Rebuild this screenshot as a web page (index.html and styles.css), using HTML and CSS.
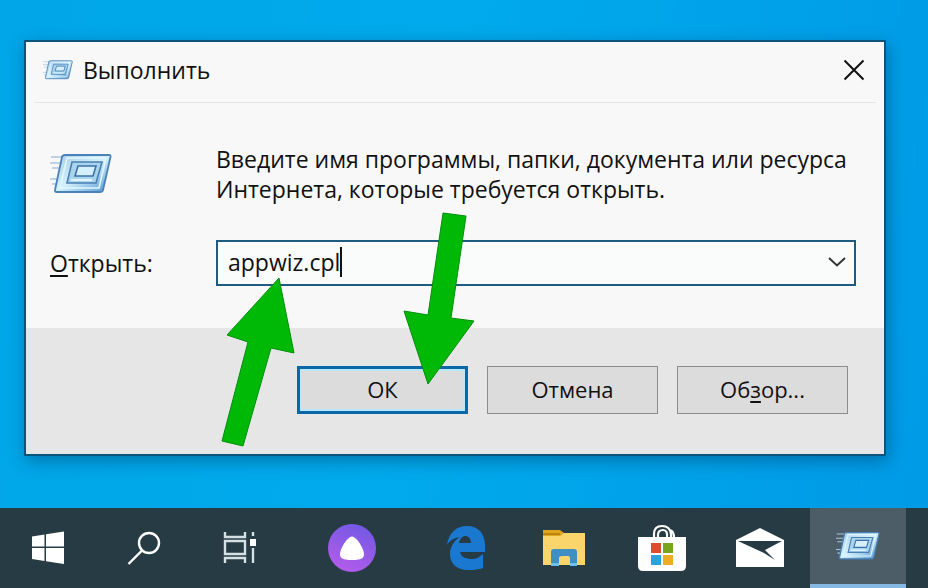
FILE: index.html
```html
<!DOCTYPE html>
<html lang="ru">
<head>
<meta charset="utf-8">
<meta name="viewport" content="width=device-width, initial-scale=1">
<title>Выполнить</title>
<link rel="stylesheet" href="styles.css">
</head>
<body>
<svg class="defs" aria-hidden="true">
  <defs>
    <linearGradient id="glass" x1="0" y1="0" x2="1" y2="1">
      <stop offset="0" stop-color="#a9cbea"/>
      <stop offset=".5" stop-color="#d3f1fb"/>
      <stop offset="1" stop-color="#4f93cf"/>
    </linearGradient>
    <linearGradient id="alice" x1=".7" y1="0" x2=".3" y2="1">
      <stop offset="0" stop-color="#7259e4"/>
      <stop offset="1" stop-color="#b45cea"/>
    </linearGradient>
    <symbol id="run" viewBox="0 0 62 42">
      <path d="M1 4h12M0 10h11M2 15h7M0 26h8M2 31h4" stroke="#a9c6de" stroke-width="1.5" fill="none"/>
      <path d="M15 2H59q2 0 1.500 2L53 37q-.5 2-3 2H7q-2.500 0-2-2L12 4q.5-2 3-2z" fill="url(#glass)" stroke="#4a82b8" stroke-width="1.800"/>
      <path d="M17 5H56L49 35H10z" fill="none" stroke="#e2f8ff" stroke-width="1.500"/>
      <path d="M22 9H52L46 30H17z" fill="#a8d5ee" stroke="#4a7fb3" stroke-width="1.600"/>
      <path d="M28 13H46L43 23H25z" fill="#d5effc" stroke="#3e70a8" stroke-width="1.600"/>
      <path d="M21 27H42" stroke="#dff5ff" stroke-width="2"/>
    </symbol>
  </defs>
</svg>

<main class="desktop">
  <form class="dialog" role="dialog" aria-labelledby="dialog-title">
    <header class="titlebar">
      <svg class="title-icon" aria-hidden="true"><use href="#run"/></svg>
      <h1 id="dialog-title">Выполнить</h1>
      <button class="close" type="button" aria-label="Закрыть">
        <svg viewBox="0 0 22 22" aria-hidden="true"><path d="M1.500 1.500 20.500 20.500M20.500 1.500 1.500 20.500"/></svg>
      </button>
    </header>

    <div class="body">
      <svg class="run-icon" aria-hidden="true"><use href="#run"/></svg>
      <p>Введите имя программы, папки, документа или ресурса<br>Интернета, которые требуется открыть.</p>
      <label for="command"><u>О</u>ткрыть:</label>
      <div class="combo">
        <input id="command" type="text" value="appwiz.cpl" size="10" autocomplete="off" spellcheck="false">
        <span class="caret"></span>
        <button class="drop" type="button" aria-label="Показать список">
          <svg viewBox="0 0 18 10" aria-hidden="true"><path d="M1 1 9 8.500 17 1"/></svg>
        </button>
      </div>
    </div>

    <footer class="actions">
      <button class="btn primary" type="button">ОК</button>
      <button class="btn" type="button">Отмена</button>
      <button class="btn" type="button">Об<u>з</u>ор...</button>
    </footer>

    <svg class="arrows" viewBox="0 0 480 420" aria-hidden="true">
      <path d="M253 236 268 311 245 306 217 404 196 399 222 300 201 293z"/>
      <path d="M417 171 440 174 425 276 448 279 402 342 378 269 402 273z"/>
    </svg>
  </form>
</main>

<nav class="taskbar" aria-label="Панель задач">
  <button type="button" aria-label="Пуск">
    <svg width="34" height="34" viewBox="0 0 34 34"><path fill="#fff" d="M1 5.500 13.500 3.500V15.500H1zM15 3.300 33 .5V15.500H15zM1 17H13.500V30L1 28zM15 17H33V33L15 30.200z"/></svg>
  </button>
  <button type="button" aria-label="Поиск">
    <svg width="34" height="34" viewBox="0 0 34 34" fill="none" stroke="#fff" stroke-width="2.400"><circle cx="22" cy="12" r="10"/><path d="M15 19.500 1.500 33"/></svg>
  </button>
  <button type="button" aria-label="Представление задач">
    <svg width="34" height="34" viewBox="0 0 34 34" fill="none" stroke="#d5e0e4" stroke-width="2.400"><path d="M2 1V6H22V1M2 10H22V23H2zM2 32V27H22V32M30 1V5M30 17V32"/><path fill="#fff" stroke="none" d="M27 8H33V15H27z"/></svg>
  </button>
  <button class="alice" type="button" aria-label="Алиса">
    <svg width="48" height="48" viewBox="0 0 48 48"><circle cx="24" cy="24" r="24" fill="url(#alice)"/><path fill="#fff" d="M24 12.500C28.500 12.500 36 24.500 36 30.500C36 35 31 36 24 36S12 35 12 30.500C12 24.500 19.500 12.500 24 12.500z"/></svg>
  </button>
  <button type="button" aria-label="Microsoft Edge">
    <svg width="40" height="44" viewBox="0 0 40 44"><path fill="#1b78d0" d="M1 19C3 6 11 0 21 0C33 0 39 8 39 20V26H14C15 31 20 33 26 33C30 33 34 31 37 28V42C33 43.500 28 44 22 44C10 44 4 37 4 28C4 20 9 14 14 11C8 12 4 14 1 19zM13 17H25C25 12 22 10 19.500 10C16.500 10 14 12.500 13 17z"/></svg>
  </button>
  <button type="button" aria-label="Проводник">
    <svg width="44" height="40" viewBox="0 0 44 40"><path fill="#e1a51c" d="M1 2H18L22 5H42V36H1z"/><path fill="#f9d56c" d="M1 8H18L22 5H43V37H1z"/><path fill="#bd8412" d="M1 5H18V7H1z"/><path fill="#3d8fc4" d="M12 21H32Q35 21 35 24V38H28V30Q28 28 26 28H20Q17 28 17 30V38H9V24Q9 21 12 21z"/><path fill="#6cc0eb" d="M9 35H17V38H9zM28 35H35V38H28z"/></svg>
  </button>
  <button type="button" aria-label="Microsoft Store">
    <svg width="48" height="48" viewBox="0 0 48 48"><path fill="#fff" d="M0 13H48V42Q48 47 43 47H5Q0 47 0 42z"/><path fill="none" stroke="#fff" stroke-width="2.200" d="M16 14V10Q16 2 24 2T33 10V14M20 14V11Q20 6 25 6T29 14M32 6Q36 7 36 14"/><path fill="#dc4d2b" d="M13 19H23V29H13z"/><path fill="#77a51b" d="M25 19H35V29H25z"/><path fill="#2ba4dc" d="M13 31H23V41H13z"/><path fill="#eead20" d="M25 31H35V41H25z"/></svg>
  </button>
  <button type="button" aria-label="Почта">
    <svg width="48" height="40" viewBox="0 0 48 40"><path fill="#fff" d="M0 12 24 0 48 12V39H0z"/><path fill="#263b44" d="M2 13H46L29 22 39 32 28 25z"/></svg>
  </button>
  <button class="active" type="button" aria-label="Выполнить">
    <svg width="44" height="30"><use href="#run"/></svg>
  </button>
</nav>
</body>
</html>
```
FILE: styles.css
```css
* {
  box-sizing: border-box;
}

body {
  margin: 0;
  min-height: 100vh;
  display: flex;
  flex-direction: column;
  background: linear-gradient(100deg, #00a6e8, #00aaec 45%, #009ae6);
  color: #111;
  font: 23px/30px "Open Sans", "Noto Sans", sans-serif;
}

button,
input {
  font: inherit;
  color: inherit;
  border: 0;
  padding: 0;
  background: none;
}

u {
  text-decoration-thickness: 2px;
  text-underline-offset: 3px;
}

.defs {
  position: absolute;
  width: 0;
  height: 0;
}

.desktop {
  flex: 1;
  padding: 40px 42px 52px 24px;
}

.dialog {
  position: relative;
  border: 2px solid #0d5578;
  background: #f8f8f8;
  box-shadow: 2px 5px 16px rgba(0, 45, 80, 0.4);
}

.titlebar {
  display: flex;
  align-items: center;
  height: 61px;
  margin: 0 8px;
  padding: 0 9px 4px;
  border-bottom: 1px solid #e5e5e5;
}

.title-icon {
  width: 30px;
  height: 22px;
}

h1 {
  flex: 1;
  margin: 0 0 0 10px;
  font: inherit;
}

.close {
  width: 26px;
  height: 26px;
  display: grid;
  place-items: center;
}

.close svg {
  width: 22px;
  height: 22px;
  fill: none;
  stroke: #111;
  stroke-width: 2;
}

.body {
  display: grid;
  grid-template-columns: 166px 1fr;
  row-gap: 36px;
  align-items: center;
  padding: 41px 28px 42px 24px;
}

.run-icon {
  width: 62px;
  height: 44px;
}

.body p {
  margin: 0;
  white-space: nowrap;
}

.combo {
  display: flex;
  align-items: center;
  height: 46px;
  padding: 0 8px 2px 10px;
  border: 2px solid #1d5c80;
  background: #fafcfc;
}

.combo input {
  min-width: 0;
  field-sizing: content;
  outline: 0;
}

.caret {
  width: 2px;
  height: 30px;
  background: #111;
}

.drop {
  display: grid;
  margin-left: auto;
}

.drop svg {
  width: 18px;
  height: 10px;
  fill: none;
  stroke: #333;
  stroke-width: 2;
}

.actions {
  display: flex;
  justify-content: flex-end;
  gap: 19px;
  padding: 38px 36px 40px;
  background: #e6e6e6;
}

.btn {
  width: 171px;
  height: 48px;
  padding-bottom: 2px;
  border: 1px solid #8c8c8c;
  background: #dcdcdc;
  font-size: 22px;
}

.primary {
  border: 3px solid #0a68a8;
  box-shadow: inset 0 0 0 2px #b8e6ff;
}

.arrows {
  position: absolute;
  top: 0;
  left: 0;
  width: 480px;
  height: 420px;
  fill: #00b906;
  stroke: #008f0c;
  pointer-events: none;
}

.taskbar {
  display: flex;
  height: 80px;
  background: #263b44;
}

.taskbar button {
  flex: 0 1 96px;
  display: grid;
  place-items: center;
}

.taskbar .alice {
  margin: 0 16px;
}

.taskbar .alice ~ button {
  margin-left: 2px;
}

.taskbar .active {
  background: #4d5d67;
  border-bottom: 4px solid #86b8e4;
}
```
